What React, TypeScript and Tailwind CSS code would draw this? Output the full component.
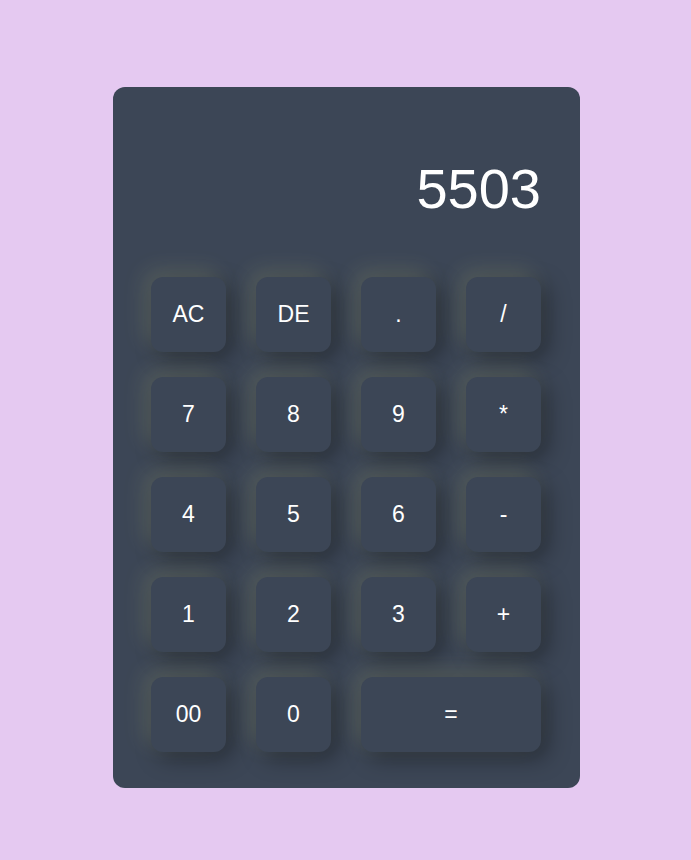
import React from "react";

const keys: { label: string; wide?: boolean }[] = [
  { label: "AC" }, { label: "DE" }, { label: "." }, { label: "/" },
  { label: "7" }, { label: "8" }, { label: "9" }, { label: "*" },
  { label: "4" }, { label: "5" }, { label: "6" }, { label: "-" },
  { label: "1" }, { label: "2" }, { label: "3" }, { label: "+" },
  { label: "00" }, { label: "0" }, { label: "=", wide: true },
];

export default function App() {
  return (
    <div
      className="min-h-[860px] w-full bg-[#e5c9f1] flex justify-start pl-[113px] pt-[87px]"
      style={{ fontFamily: '"Liberation Sans", Arial, sans-serif' }}
    >
      <div className="w-[467px] h-[701px] rounded-xl bg-[#3c4656] pl-[38px] pr-[39px] flex flex-col">
        <div className="h-[190px] flex items-center justify-end pr-0 pt-[14px] text-white text-[56px] leading-none">
          5503
        </div>
        <div className="grid grid-cols-[75px_75px_75px_75px] gap-x-[30px] gap-y-[25px]">
          {keys.map((k) => (
            <button
              key={k.label}
              className={`${k.wide ? "col-span-2" : ""} h-[75px] rounded-xl bg-[#3c4656] text-white text-[23px] flex items-center justify-center shadow-[-7px_-7px_22px_rgba(255,255,150,0.13),7px_7px_22px_rgba(0,0,0,0.35)]`}
            >
              {k.label}
            </button>
          ))}
        </div>
      </div>
    </div>
  );
}
